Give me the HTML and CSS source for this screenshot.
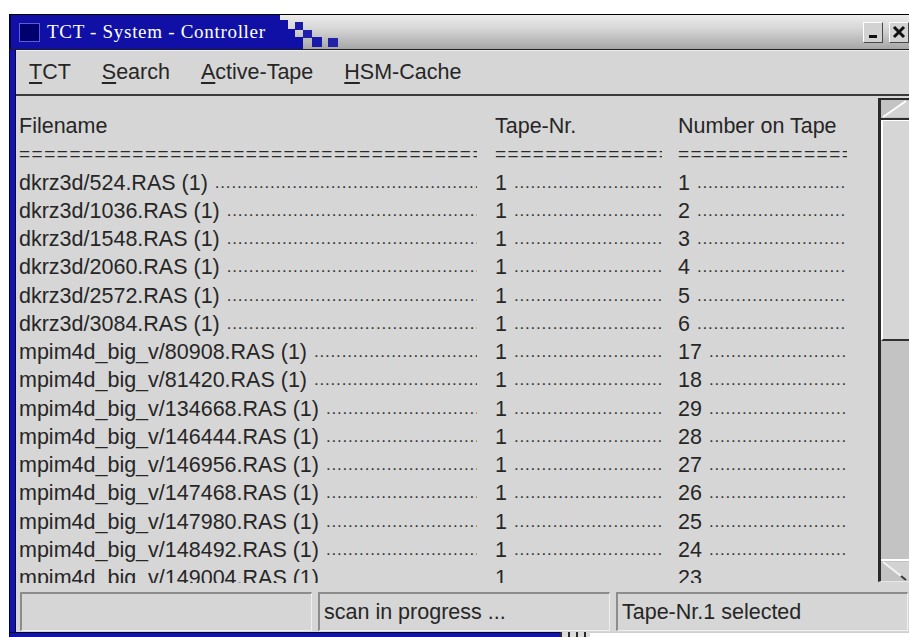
FILE: index.html
```html
<!DOCTYPE html>
<html lang="en">
<head>
<meta charset="utf-8">
<title>TCT - System - Controller</title>
<link rel="stylesheet" href="styles.css">
</head>
<body>
<div class="window">
  <div class="titlebar">
    <div class="title-blue">
      <span class="win-icon"></span>
      <span class="title">TCT - System - Controller</span>
    </div>
    <svg class="title-steps" width="60" height="34" viewBox="0 0 60 34">
      <rect x="0" y="5" width="8" height="29" fill="#1010a6"/>
      <rect x="8" y="14" width="7" height="20" fill="#1010a6"/>
      <rect x="15" y="7" width="8" height="8" fill="#1a1aa8"/>
      <rect x="15" y="22" width="8" height="12" fill="#1010a6"/>
      <rect x="23" y="15" width="9" height="8" fill="#2020aa"/>
      <rect x="32" y="22" width="10" height="10" fill="#1a1aa8"/>
      <rect x="48" y="23" width="10" height="9" fill="#2222a8"/>
    </svg>
    <div class="title-buttons">
      <span class="tbtn"><span class="min-bar"></span></span>
      <span class="tbtn">
        <svg width="14" height="14" viewBox="0 0 14 14"><path d="M2 2 L12 12 M12 2 L2 12" stroke="#111" stroke-width="3"/></svg>
      </span>
    </div>
  </div>

  <div class="frame">
    <div class="client">
      <nav class="menubar">
        <span class="menu"><u>T</u>CT</span>
        <span class="menu"><u>S</u>earch</span>
        <span class="menu"><u>A</u>ctive-Tape</span>
        <span class="menu"><u>H</u>SM-Cache</span>
      </nav>

      <div class="listarea">
        <div class="list">
          <div class="row"><span class="c1">Filename</span><span class="c2">Tape-Nr.</span><span class="c3">Number on Tape</span></div>
          <div class="row rule"><span class="c1"><span class="fill">========================================</span></span><span class="c2"><span class="fill">===============</span></span><span class="c3"><span class="fill">===============</span></span></div>
          <div class="row"><span class="c1">dkrz3d/524.RAS (1)<span class="dots">..................................................</span></span><span class="c2">1<span class="dots">...........................</span></span><span class="c3">1<span class="dots">...........................</span></span></div>
          <div class="row"><span class="c1">dkrz3d/1036.RAS (1)<span class="dots">..................................................</span></span><span class="c2">1<span class="dots">...........................</span></span><span class="c3">2<span class="dots">...........................</span></span></div>
          <div class="row"><span class="c1">dkrz3d/1548.RAS (1)<span class="dots">..................................................</span></span><span class="c2">1<span class="dots">...........................</span></span><span class="c3">3<span class="dots">...........................</span></span></div>
          <div class="row"><span class="c1">dkrz3d/2060.RAS (1)<span class="dots">..................................................</span></span><span class="c2">1<span class="dots">...........................</span></span><span class="c3">4<span class="dots">...........................</span></span></div>
          <div class="row"><span class="c1">dkrz3d/2572.RAS (1)<span class="dots">..................................................</span></span><span class="c2">1<span class="dots">...........................</span></span><span class="c3">5<span class="dots">...........................</span></span></div>
          <div class="row"><span class="c1">dkrz3d/3084.RAS (1)<span class="dots">..................................................</span></span><span class="c2">1<span class="dots">...........................</span></span><span class="c3">6<span class="dots">...........................</span></span></div>
          <div class="row"><span class="c1">mpim4d_big_v/80908.RAS (1)<span class="dots">...............................</span></span><span class="c2">1<span class="dots">...........................</span></span><span class="c3">17<span class="dots">..........................</span></span></div>
          <div class="row"><span class="c1">mpim4d_big_v/81420.RAS (1)<span class="dots">...............................</span></span><span class="c2">1<span class="dots">...........................</span></span><span class="c3">18<span class="dots">..........................</span></span></div>
          <div class="row"><span class="c1">mpim4d_big_v/134668.RAS (1)<span class="dots">.............................</span></span><span class="c2">1<span class="dots">...........................</span></span><span class="c3">29<span class="dots">..........................</span></span></div>
          <div class="row"><span class="c1">mpim4d_big_v/146444.RAS (1)<span class="dots">.............................</span></span><span class="c2">1<span class="dots">...........................</span></span><span class="c3">28<span class="dots">..........................</span></span></div>
          <div class="row"><span class="c1">mpim4d_big_v/146956.RAS (1)<span class="dots">.............................</span></span><span class="c2">1<span class="dots">...........................</span></span><span class="c3">27<span class="dots">..........................</span></span></div>
          <div class="row"><span class="c1">mpim4d_big_v/147468.RAS (1)<span class="dots">.............................</span></span><span class="c2">1<span class="dots">...........................</span></span><span class="c3">26<span class="dots">..........................</span></span></div>
          <div class="row"><span class="c1">mpim4d_big_v/147980.RAS (1)<span class="dots">.............................</span></span><span class="c2">1<span class="dots">...........................</span></span><span class="c3">25<span class="dots">..........................</span></span></div>
          <div class="row"><span class="c1">mpim4d_big_v/148492.RAS (1)<span class="dots">.............................</span></span><span class="c2">1<span class="dots">...........................</span></span><span class="c3">24<span class="dots">..........................</span></span></div>
          <div class="row"><span class="c1">mpim4d_big_v/149004.RAS (1)</span><span class="c2">1</span><span class="c3">23</span></div>
        </div>

        <div class="scrollbar">
          <svg class="arrow" width="40" height="20" viewBox="0 0 40 20">
            <rect width="40" height="20" fill="#c3c3c3"/>
            <polygon points="2,17 24,1 40,1 40,17" fill="#d2d2d2"/>
            <line x1="2" y1="17" x2="25" y2="1" stroke="#ffffff" stroke-width="2"/>
            <line x1="0" y1="19" x2="40" y2="19" stroke="#2e2e2e" stroke-width="2"/>
          </svg>
          <div class="thumb"></div>
          <div class="trough"></div>
          <svg class="arrow" width="40" height="22" viewBox="0 0 40 22">
            <rect width="40" height="22" fill="#c3c3c3"/>
            <polygon points="2,3 40,3 40,21 25,21" fill="#d2d2d2"/>
            <line x1="0" y1="1" x2="40" y2="1" stroke="#ffffff" stroke-width="2"/>
            <line x1="2" y1="3" x2="20" y2="17" stroke="#f4f4f4" stroke-width="2"/>
            <line x1="20" y1="17" x2="25" y2="21" stroke="#3a3a3a" stroke-width="2"/>
          </svg>
        </div>
      </div>

      <div class="statusbar">
        <div class="panel"></div>
        <div class="panel">scan in progress ...</div>
        <div class="panel">Tape-Nr.1 selected</div>
      </div>
    </div>
  </div>

  <div class="frame-bottom">
    <span class="fb-blue"></span>
    <span class="fb-grip"></span>
    <span class="fb-rest"></span>
  </div>
</div>
</body>
</html>
```

FILE: styles.css
```css
html, body {
  margin: 0;
  height: 100%;
  overflow: hidden;
  background: #ffffff;
}

body {
  font-family: "Liberation Sans", Arial, sans-serif;
  font-size: 21.5px;
  color: #262626;
}

.window {
  margin: 14px 0 0 9px;
  width: 906px;
}

/* ---- title bar ---- */
.titlebar {
  display: flex;
  height: 34px;
  border-top: 1px solid #000;
  border-bottom: 1px solid #1e1e1e;
  background: linear-gradient(#ececec, #d6d6d6 40%, #a6a6a6);
}

.title-blue {
  box-sizing: border-box;
  width: 271px;
  display: flex;
  align-items: center;
  background: #1010a6;
  border-left: 2px solid #00004a;
  padding-left: 8px;
}

.win-icon {
  box-sizing: border-box;
  width: 21px;
  height: 19px;
  background: #00006e;
  border: 1px solid #5c5cd8;
  margin-right: 7px;
  margin-top: 1px;
}

.title {
  font-family: "Liberation Serif", "Times New Roman", serif;
  font-size: 19px;
  letter-spacing: 0.7px;
  color: #ffffff;
  white-space: nowrap;
}

.title-steps {
  flex: none;
}

.title-buttons {
  margin-left: auto;
  display: flex;
  align-items: center;
  gap: 6px;
  padding-right: 6px;
}

.tbtn {
  box-sizing: border-box;
  width: 20px;
  height: 21px;
  background: #d2d2d2;
  border: 1px solid;
  border-color: #ffffff #474747 #474747 #ffffff;
  display: flex;
  align-items: center;
  justify-content: center;
}

.min-bar {
  align-self: flex-end;
  width: 8px;
  height: 3px;
  margin-bottom: 4px;
  background: #111;
}

/* ---- window frame ---- */
.frame {
  border-left: 1px solid #00004a;
  padding-left: 5px;
  background: #1414aa;
}

.client {
  border-left: 1px solid #070740;
  background: #d6d6d6;
}

/* ---- menu bar ---- */
.menubar {
  display: flex;
  gap: 31px;
  height: 44px;
  line-height: 44px;
  padding-left: 13px;
  border-bottom: 2px solid #3a3a3a;
  box-shadow: inset 0 1px 0 #eeeeee;
}

.menu u {
  text-underline-offset: 3px;
}

/* ---- file list ---- */
.listarea {
  display: flex;
  height: 487px;
}

.list {
  box-sizing: border-box;
  flex: none;
  width: 862px;
  overflow: hidden;
  padding: 16px 0 0 3px;
}

.row {
  display: flex;
  height: 28.25px;
  line-height: 28.25px;
  white-space: nowrap;
}

.c1, .c2, .c3 {
  flex: none;
  display: flex;
  overflow: hidden;
}

.c1 { width: 458px; }
.c2 { width: 167px; margin-left: 18px; }
.c3 { width: 169px; margin-left: 16px; }

/* leader dots after each entry */
.dots {
  flex: 1;
  min-width: 0;
  overflow: hidden;
  margin-left: 7px;
  font-size: 17px;
  letter-spacing: 0.8px;
  color: #333333;
}

/* the ===== line under the headings */
.rule .fill {
  font-size: 19px;
  letter-spacing: 1.5px;
  color: #2a2a2a;
}

/* ---- scrollbar ---- */
.scrollbar {
  flex: 1;
  margin: 2px 0 1px;
  display: flex;
  flex-direction: column;
  overflow: hidden;
  background: #c3c3c3;
  border-left: 3px solid #2a2a2a;
  border-top: 2px solid #2a2a2a;
  border-bottom: 1px solid #e8e8e8;
}

.arrow {
  display: block;
  flex: none;
}

.thumb {
  flex: none;
  height: 218px;
  background: #d6d6d6;
  border-left: 2px solid #ffffff;
  border-top: 1px solid #ffffff;
  border-bottom: 2px solid #303030;
}

.trough {
  flex: 1;
  background: #c3c3c3;
}

/* ---- status bar ---- */
.statusbar {
  box-sizing: border-box;
  display: flex;
  gap: 6px;
  height: 49px;
  padding: 9px 0 1px 4px;
}

.panel {
  box-sizing: border-box;
  flex: none;
  width: 292px;
  height: 39px;
  border-style: solid;
  border-width: 2px 1px 1px 2px;
  border-color: #8c8c8c #efefef #efefef #8c8c8c;
  padding-left: 4px;
  line-height: 36px;
  white-space: nowrap;
}

/* ---- bottom edge of the frame ---- */
.frame-bottom {
  display: flex;
  height: 6px;
}

.fb-blue {
  box-sizing: border-box;
  width: 551px;
  background: #1414aa;
  border-top: 1px solid #00002e;
  border-left: 1px solid #00004a;
}

.fb-grip {
  width: 30px;
  background: repeating-linear-gradient(90deg, #2a2a2a 0 2px, #dcdcdc 2px 8px);
}

.fb-rest {
  flex: 1;
  border-top: 1px solid #cfcfcf;
}
```
